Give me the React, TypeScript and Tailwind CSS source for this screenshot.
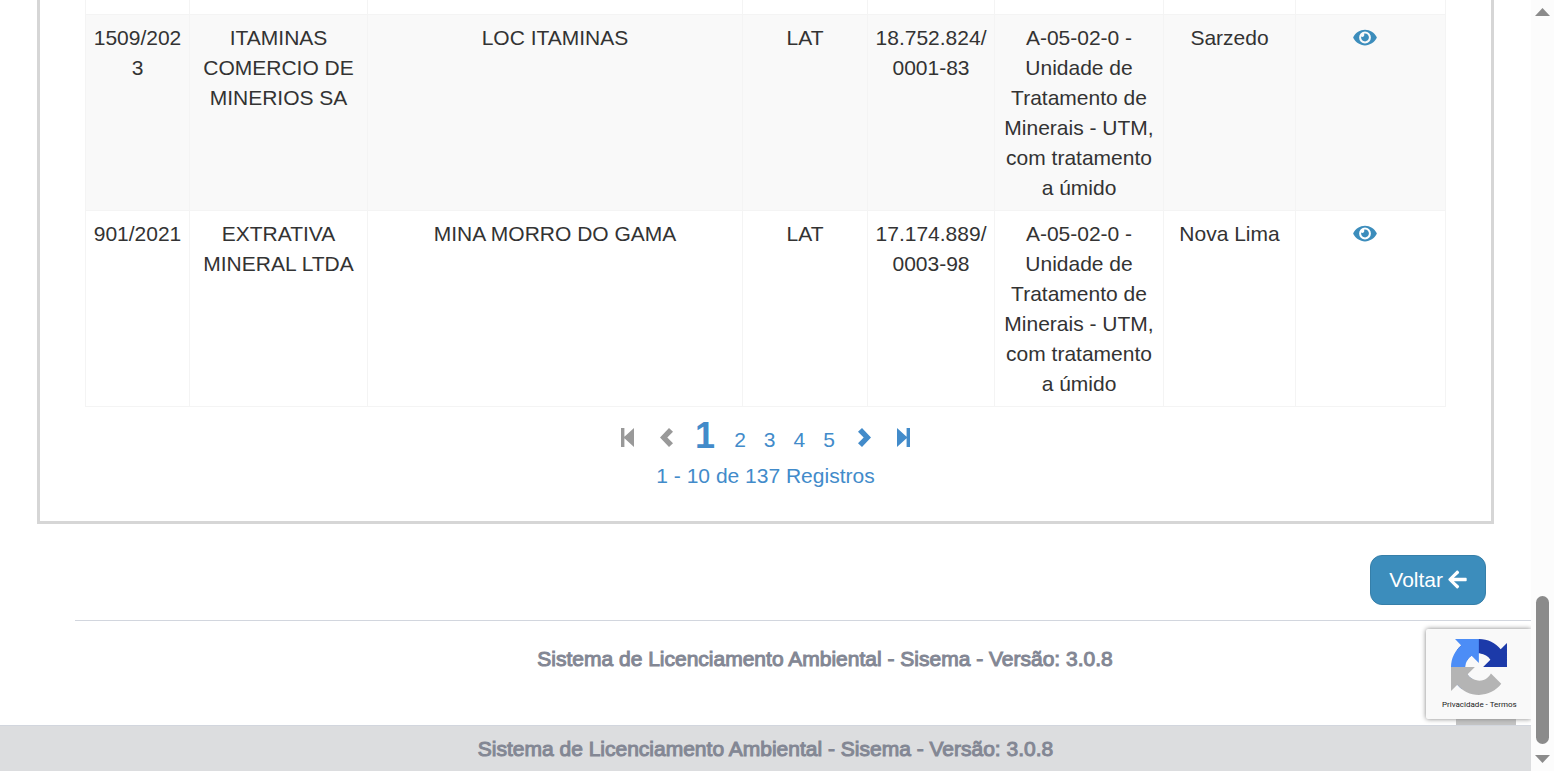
import type { ReactNode } from "react";
import { FaArrowLeft, FaEye } from "react-icons/fa";

type Processo = {
  numero: string;
  empresa: string;
  empreendimento: string;
  modalidade: string;
  cnpj: string;
  atividade: string;
  municipio: string;
};

const ATIVIDADE = "A-05-02-0 - Unidade de Tratamento de Minerais - UTM, com tratamento a úmido";
const VERSAO = "Sistema de Licenciamento Ambiental - Sisema - Versão: 3.0.8";

const processos: Processo[] = [
  {
    numero: "1509/2023",
    empresa: "ITAMINAS COMERCIO DE MINERIOS SA",
    empreendimento: "LOC ITAMINAS",
    modalidade: "LAT",
    cnpj: "18.752.824/0001-83",
    atividade: ATIVIDADE,
    municipio: "Sarzedo",
  },
  {
    numero: "901/2021",
    empresa: "EXTRATIVA MINERAL LTDA",
    empreendimento: "MINA MORRO DO GAMA",
    modalidade: "LAT",
    cnpj: "17.174.889/0003-98",
    atividade: ATIVIDADE,
    municipio: "Nova Lima",
  },
];

function Cell({ children }: { children?: ReactNode }) {
  return (
    <td className="border border-[#f4f4f4] px-[7px] pt-2 pb-[7px] text-center align-top break-all">
      {children}
    </td>
  );
}

function WordCell({ children }: { children?: ReactNode }) {
  return (
    <td className="border border-[#f4f4f4] px-[7px] pt-2 pb-[7px] text-center align-top break-words">
      {children}
    </td>
  );
}

function ProcessTable() {
  return (
    <table className="w-full table-fixed border-collapse">
      <colgroup>
        <col className="w-[104px]" />
        <col className="w-[178px]" />
        <col />
        <col className="w-[125px]" />
        <col className="w-[127px]" />
        <col className="w-[169px]" />
        <col className="w-[132px]" />
        <col className="w-[150px]" />
      </colgroup>
      <tbody>
        <tr className="h-[14px]">
          {Array.from({ length: 8 }, (_, i) => (
            <td key={i} className="border border-t-0 border-[#f4f4f4]" />
          ))}
        </tr>
        {processos.map((p) => (
          <tr key={p.numero} className="odd:bg-white even:bg-[#f9f9f9]">
            <Cell>{p.numero}</Cell>
            <WordCell>{p.empresa}</WordCell>
            <WordCell>{p.empreendimento}</WordCell>
            <WordCell>{p.modalidade}</WordCell>
            <Cell>{p.cnpj}</Cell>
            <WordCell>{p.atividade}</WordCell>
            <WordCell>{p.municipio}</WordCell>
            <WordCell>
              <a
                href="#"
                aria-label={`Visualizar ${p.numero}`}
                className="flex h-[30px] items-center justify-center pr-[11px] text-[#3c8dbc]"
              >
                <FaEye className="h-[21px] w-6" />
              </a>
            </WordCell>
          </tr>
        ))}
      </tbody>
    </table>
  );
}

function Step({ flip = false }: { flip?: boolean }) {
  return (
    <svg viewBox="0 0 13 19" className={flip ? "h-[19px] w-[13px] rotate-180" : "h-[19px] w-[13px]"} fill="currentColor">
      <path d="M0 0h3.4v8.8L13 0v19L3.4 10.2V19H0z" />
    </svg>
  );
}

function Chevron({ flip = false }: { flip?: boolean }) {
  return (
    <svg viewBox="0 0 13 19" className={flip ? "h-[19px] w-[13px] rotate-180" : "h-[19px] w-[13px]"} fill="currentColor">
      <path d="M9 0l4 3.8-5.7 5.7 5.7 5.7L9 19 0 9.5z" />
    </svg>
  );
}

function Pagination() {
  return (
    <nav aria-label="Paginação" className="flex flex-col items-center text-[#428bca]">
      <div className="flex h-[54px] items-center pt-2">
        <button disabled aria-label="Primeira página" className="text-[#999]">
          <Step />
        </button>
        <button disabled aria-label="Página anterior" className="ml-[26px] text-[#999]">
          <Chevron />
        </button>
        <button aria-current="page" className="ml-[22px] pb-1 text-[36px] leading-9 font-bold">
          1
        </button>
        <div className="ml-[19px] flex gap-[18px] pt-1">
          {[2, 3, 4, 5].map((n) => (
            <button key={n}>{n}</button>
          ))}
        </div>
        <button aria-label="Próxima página" className="ml-[23px]">
          <Chevron flip />
        </button>
        <button aria-label="Última página" className="ml-[26px]">
          <Step flip />
        </button>
      </div>
      <p>1 - 10 de 137 Registros</p>
    </nav>
  );
}

function RecaptchaBadge() {
  return (
    <div className="absolute top-[629px] right-0 h-[90px] w-[105px] rounded-l-xs bg-[#f9f9f9] pt-[10px] pl-4 shadow-[0_0_5px_gray] [clip-path:inset(-8px_0_-8px_-8px)]">
      <svg viewBox="0 0 64 64" className="ml-[9px] size-14">
        <path
          fill="#1c3aa9"
          d="M64 31.955l-.033-1.37V4.687l-7.16 7.16C50.948 4.674 42.033.093 32.05.093c-10.4 0-19.622 4.96-25.458 12.64l11.736 11.86a15.55 15.55 0 0 1 4.754-5.334c2.05-1.6 4.952-2.906 8.968-2.906.485 0 .86.057 1.135.163 4.976.393 9.288 3.14 11.828 7.124l-8.307 8.307L64 31.953"
        />
        <path
          fill="#4c8df6"
          d="M31.862.094l-1.37.033H4.594l7.16 7.16C4.58 13.147 0 22.06 0 32.046c0 10.4 4.96 19.622 12.64 25.458L24.5 45.768a15.55 15.55 0 0 1-5.334-4.754c-1.6-2.05-2.906-4.952-2.906-8.968 0-.485.057-.86.163-1.135.393-4.976 3.14-9.288 7.124-11.828l8.307 8.307L31.86.095"
        />
        <path
          fill="#b4b4b4"
          d="M.001 32.045l.033 1.37v25.898l7.16-7.16c5.86 7.173 14.774 11.754 24.76 11.754 10.4 0 19.622-4.96 25.458-12.64l-11.736-11.86a15.55 15.55 0 0 1-4.754 5.334c-2.05 1.6-4.952 2.906-8.968 2.906-.485 0-.86-.057-1.135-.163-4.976-.393-9.288-3.14-11.828-7.124l8.307-8.307c-10.522.04-22.4.066-27.295-.005"
        />
      </svg>
      <p className="mt-[5px] font-['Roboto',sans-serif] text-[8px] leading-[10px] whitespace-nowrap text-[#222]">
        <a href="#">Privacidade</a> - <a href="#">Termos</a>
      </p>
    </div>
  );
}

function Scrollbar() {
  return (
    <div aria-hidden="true" className="sticky top-0 flex h-screen w-[23px] flex-col items-center bg-[#fcfcfc] pt-2 pb-2">
      <svg viewBox="0 0 15 8" className="h-2 w-[15px]" fill="#8b8b8b">
        <path d="M7.5 0L15 8H0z" />
      </svg>
      <div className="grow" />
      <div className="h-[148px] w-[13px] rounded-full bg-[#8b8b8b]" />
      <svg viewBox="0 0 15 8" className="mt-[11px] h-2 w-[15px]" fill="#8b8b8b">
        <path d="M7.5 8L0 0h15z" />
      </svg>
    </div>
  );
}

export default function App() {
  return (
    <div className="flex bg-white font-['Liberation_Sans',Arial,sans-serif] text-[21px] leading-[30px] text-[#333]">
      <div className="relative min-w-0 flex-1">
        <main>
          <section className="mx-[37px] border-[3px] border-t-0 border-[#d6d6d6] px-[45px] pb-[30px]">
            <ProcessTable />
            <Pagination />
          </section>
          <div className="mt-[31px] mr-[45px] flex justify-end">
            <button className="flex h-[50px] items-center gap-[5px] rounded-xl border border-[#367fa9] bg-[#3c8dbc] px-[18px] text-white">
              Voltar <FaArrowLeft className="h-[21px] w-[19px]" />
            </button>
          </div>
        </main>
        <div className="mt-[15px] ml-[75px] border-t border-[#d2d6de] pt-[23px] pb-[51px] pl-11 text-center text-[#838794] [-webkit-text-stroke:1px_#838794]">
          {VERSAO}
        </div>
        <div className="absolute top-[700px] right-[15px] h-[25px] w-[60px] bg-[#c4c4c4]" />
        <footer className="border-t border-[#d2d6de] bg-[#dcdddf] pt-2 pb-2 text-center text-[#838794] [-webkit-text-stroke:1px_#838794]">
          {VERSAO}
        </footer>
        <RecaptchaBadge />
      </div>
      <Scrollbar />
    </div>
  );
}
